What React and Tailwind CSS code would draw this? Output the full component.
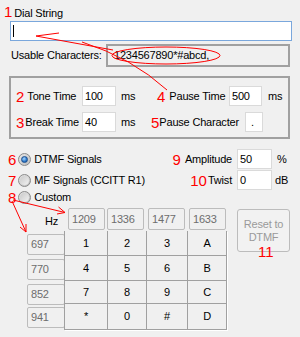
import React from "react";

const red = "text-[#ff0000] text-[15px] leading-none tracking-normal";

function Radio({ checked }) {
  return (
    <span className="w-[13px] h-[13px] rounded-full border border-[#8a8a8a] bg-[linear-gradient(135deg,#e8e8e8,#bdbdbd)] flex items-center justify-center shrink-0">
      {checked ? (
        <span className="w-[7px] h-[7px] rounded-full border border-[#1c4f8f] bg-[radial-gradient(circle_at_40%_35%,#a9d8ff,#2a77c9_60%,#174f94)]" />
      ) : (
        <span className="w-[9px] h-[9px] rounded-full bg-[linear-gradient(135deg,#c9c9c9,#f2f2f2)]" />
      )}
    </span>
  );
}

function Field({ w, value }) {
  return (
    <div className={`${w} h-[20px] bg-white border border-[#dadada] flex items-center pl-[2px] shrink-0`}>
      {value}
    </div>
  );
}

function FreqBox({ label, w }) {
  return (
    <div className={`${w} h-[22px] border border-[#bcbcbc] rounded-[2px] bg-[#f0f0f0] text-[#6d6d6d] flex items-center pl-[3px] shrink-0`}>
      {label}
    </div>
  );
}

export default function App() {
  const keys = ["1", "2", "3", "A", "4", "5", "6", "B", "7", "8", "9", "C", "*", "0", "#", "D"];
  return (
    <div className="w-[300px] h-[337px] bg-[#f0f0f0] relative overflow-hidden font-['Liberation_Sans',Arial,sans-serif] text-[11px] tracking-[-0.2px] text-black">
      {/* Title */}
      <div className="flex items-baseline h-[21px] pt-[4px] pl-[4px]">
        <span className={red}>1</span>
        <span className="ml-[2px]">Dial String</span>
      </div>

      {/* Dial input */}
      <div className="ml-[10px] w-[282px] h-[20px] bg-white border border-[#7aa7dc] flex items-start">
        <span className="ml-[2px] mt-[3px] w-[1px] h-[12px] bg-black" />
      </div>

      {/* Usable characters */}
      <div className="mt-[3px] flex items-center h-[23px]">
        <span className="pl-[11px] w-[106px]">Usable Characters:</span>
        <div className="w-[184px] h-[23px] border-2 border-[#a0a0a0] flex items-center pl-[6px]">
          1234567890*#abcd,
        </div>
      </div>

      {/* Group box */}
      <div className="mt-[9px] ml-[9px] w-[281px] h-[63px] border-2 border-[#a0a0a0] pt-[8px] flex flex-col gap-[6px]">
        <div className="flex items-center h-[20px]">
          <div className="w-[139px] flex items-center">
            <div className="w-[71px] flex items-center pl-[5px]">
              <span className={red}>2</span>
              <span className="ml-[3px]">Tone Time</span>
            </div>
            <Field w="w-[34px]" value="100" />
            <span className="ml-[5px]">ms</span>
          </div>
          <div className="w-[79px] flex items-center pl-[7px]">
            <span className={red}>4</span>
            <span className="ml-[4px]">Pause Time</span>
          </div>
          <Field w="w-[33px]" value="500" />
          <span className="ml-[6px]">ms</span>
        </div>
        <div className="flex items-center h-[20px]">
          <div className="w-[139px] flex items-center">
            <div className="w-[71px] flex items-center pl-[5px]">
              <span className={red}>3</span>
              <span className="ml-[1px]">Break Time</span>
            </div>
            <Field w="w-[34px]" value="40" />
            <span className="ml-[5px]">ms</span>
          </div>
          <div className="w-[95px] flex items-center pl-[1px]">
            <span className={red}>5</span>
            <span>Pause Character</span>
          </div>
          <Field w="w-[18px]" value={<span className="ml-[3px]">.</span>} />
        </div>
      </div>

      {/* Signal type rows */}
      <div className="mt-[10px] flex items-center h-[20px]">
        <div className="w-[165px] flex items-center pl-[8px]">
          <span className={red}>6</span>
          <span className="ml-[2px]"><Radio checked /></span>
          <span className="ml-[3px]">DTMF Signals</span>
        </div>
        <div className="w-[67px] flex items-center justify-end">
          <span className={red}>9</span>
          <span className="ml-[4px]">Amplitude</span>
        </div>
        <div className="ml-[5px]"><Field w="w-[35px]" value="50" /></div>
        <span className="ml-[5px]">%</span>
      </div>
      <div className="mt-[1px] flex items-center h-[20px]">
        <div className="w-[165px] flex items-center pl-[8px]">
          <span className={red}>7</span>
          <span className="ml-[2px]"><Radio /></span>
          <span className="ml-[3px]">MF Signals (CCITT R1)</span>
        </div>
        <div className="w-[67px] flex items-center justify-end">
          <span className={red}>10</span>
          <span className="ml-[1px]">Twist</span>
        </div>
        <div className="ml-[5px]"><Field w="w-[35px]" value="0" /></div>
        <span className="ml-[3px]">dB</span>
      </div>
      <div className="flex items-center h-[14px]">
        <div className="w-[165px] flex items-center pl-[8px]">
          <span className={red}>8</span>
          <span className="ml-[2px]"><Radio /></span>
          <span className="ml-[3px]">Custom</span>
        </div>
      </div>

      {/* Keypad */}
      <div className="mt-[4px] flex items-start">
        <div className="ml-[27px] w-[37px] flex flex-col">
          <div className="h-[23px] flex items-end pb-[2px] pl-[18px]">Hz</div>
          {["697", "770", "852", "941"].map((f, i) => (
            <div key={f} className={`${i === 2 ? "h-[23px]" : "h-[25px]"} pt-[3px]`}>
              <div className="w-[38px] h-[21px] border border-[#bcbcbc] rounded-[2px] bg-[#f0f0f0] text-[#6d6d6d] flex items-center pl-[3px]">
                {f}
              </div>
            </div>
          ))}
        </div>
        <div className="flex flex-col">
          <div className="h-[23px] flex items-start">
            <div className="ml-[4px]"><FreqBox label="1209" w="w-[37px]" /></div>
            <div className="ml-[2px]"><FreqBox label="1336" w="w-[37px]" /></div>
            <div className="ml-[4px]"><FreqBox label="1477" w="w-[37px]" /></div>
            <div className="ml-[4px]"><FreqBox label="1633" w="w-[37px]" /></div>
          </div>
          <div className="grid grid-cols-[43px_39px_41px_39px] grid-rows-[25px_25px_23px_26px] border-l border-[#a0a0a0] shadow-[1px_1px_0_#ffffff]">
            {keys.map((k) => (
              <div key={k} className="flex items-center justify-center border-r border-b border-[#a0a0a0]">
                {k}
              </div>
            ))}
          </div>
        </div>
        <div className="ml-[10px] mt-[1px] flex flex-col">
          <div className="w-[53px] h-[43px] border border-[#bcbcbc] rounded-[3px] bg-[#f2f2f2] text-[#9a9a9a] flex flex-col items-center justify-center leading-[13px]">
            <span>Reset to</span>
            <span>DTMF</span>
          </div>
          <span className={`${red} -mt-[8px] ml-[21px]`}>11</span>
        </div>
      </div>

      {/* Red annotations */}
      <svg className="absolute left-0 top-0 pointer-events-none" width="300" height="337" viewBox="0 0 300 337" fill="none" stroke="#ff0000" strokeWidth="1">
        <ellipse cx="166" cy="55.5" rx="54" ry="8.5" />
        <path d="M113 50 L36 36 L59 33" />
        <path d="M82 42 Q132 58 167 90" />
        <path d="M13 200 L65 212.5 M58.5 207 L65 212.5 L57 214" />
        <path d="M12 201 L26 232 M20 227 L26 232 L26 224" />
      </svg>
    </div>
  );
}
